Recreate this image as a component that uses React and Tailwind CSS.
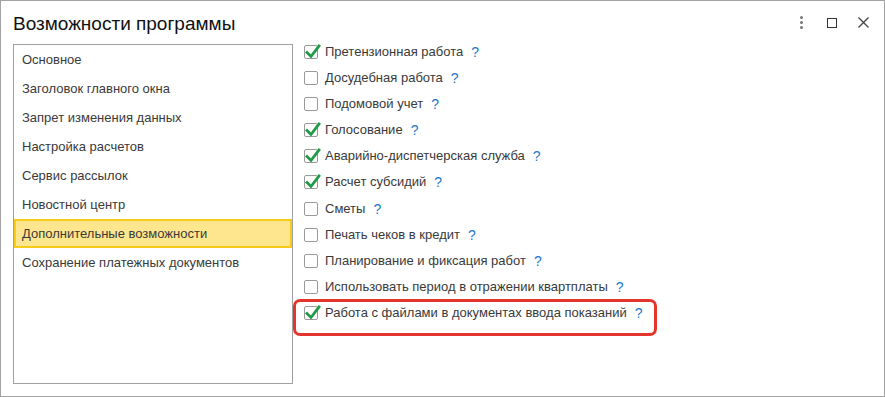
import React from 'react';

const sections = [
  'Основное',
  'Заголовок главного окна',
  'Запрет изменения данных',
  'Настройка расчетов',
  'Сервис рассылок',
  'Новостной центр',
  'Дополнительные возможности',
  'Сохранение платежных документов',
];

const options = [
  { label: 'Претензионная работа', on: true },
  { label: 'Досудебная работа', on: false },
  { label: 'Подомовой учет', on: false },
  { label: 'Голосование', on: true },
  { label: 'Аварийно-диспетчерская служба', on: true },
  { label: 'Расчет субсидий', on: true },
  { label: 'Сметы', on: false },
  { label: 'Печать чеков в кредит', on: false },
  { label: 'Планирование и фиксация работ', on: false },
  { label: 'Использовать период в отражении квартплаты', on: false },
  { label: 'Работа с файлами в документах ввода показаний', on: true, marked: true },
];

const Checkbox = ({ on }) => (
  <div className="relative w-[14px] h-[14px] shrink-0 border border-[#9a9a9a] rounded-[2px] bg-white">
    {on && (
      <svg className="absolute -left-[1px] -top-[3px]" width="18" height="18" viewBox="0 0 18 18">
        <path d="M3 9.5 L7 13.5 L15 3" fill="none" stroke="#1e9a48" strokeWidth="2.8" strokeLinecap="square" />
      </svg>
    )}
  </div>
);

const App = () => {
  return (
    <div
      className="w-[885px] h-[397px] bg-white border border-[#a3a3a3] flex flex-col text-[#3a3a3a]"
      style={{ fontFamily: '"Liberation Sans", Arial, sans-serif' }}
    >
      <div className="h-[43px] shrink-0 flex items-center pl-[12px] pr-[15px]">
        <h1 className="text-[19px] text-[#111] leading-none pt-[1px]">Возможности программы</h1>
        <div className="ml-auto flex items-center">
          <div className="flex flex-col gap-[2px] w-[3px] mr-[24px]">
            <span className="w-[3px] h-[3px] bg-[#777] rounded-full" />
            <span className="w-[3px] h-[3px] bg-[#777] rounded-full" />
            <span className="w-[3px] h-[3px] bg-[#777] rounded-full" />
          </div>
          <div className="w-[10px] h-[10px] border-[1.5px] border-[#333] mr-[21px]" />
          <svg width="11" height="11" viewBox="0 0 11 11">
            <path d="M0.5 0.5 L10.5 10.5 M10.5 0.5 L0.5 10.5" stroke="#444" strokeWidth="1.3" />
          </svg>
        </div>
      </div>

      <div className="flex pl-[12px]">
        <div className="w-[280px] h-[340px] border border-[#a0a0a0] shrink-0">
          {sections.map((s) => {
            const active = s === 'Дополнительные возможности';
            return (
              <div
                key={s}
                className={
                  active
                    ? 'h-[29px] flex items-center pl-[6px] text-[13px] bg-[#fde68d] border-2 border-[#f8cb1b]'
                    : 'h-[29px] flex items-center pl-[8px] text-[13px]'
                }
              >
                {s}
              </div>
            );
          })}
        </div>

        <div className="flex flex-col pl-[11px] pt-[1px]">
          {options.map((o) => (
            <div key={o.label} className="relative h-[26.1px] flex items-start">
              {o.marked && (
                <div className="absolute left-[-11px] top-[-7px] w-[364px] h-[37px] border-[3px] border-[#e3352c] rounded-[7px]" />
              )}
              <Checkbox on={o.on} />
              <span className="ml-[7px] text-[13px] leading-[14px]">{o.label}</span>
              <span className="ml-[8px] text-[14px] leading-[14px] text-[#1f78c8]">?</span>
            </div>
          ))}
        </div>
      </div>
    </div>
  );
};

export default App;
